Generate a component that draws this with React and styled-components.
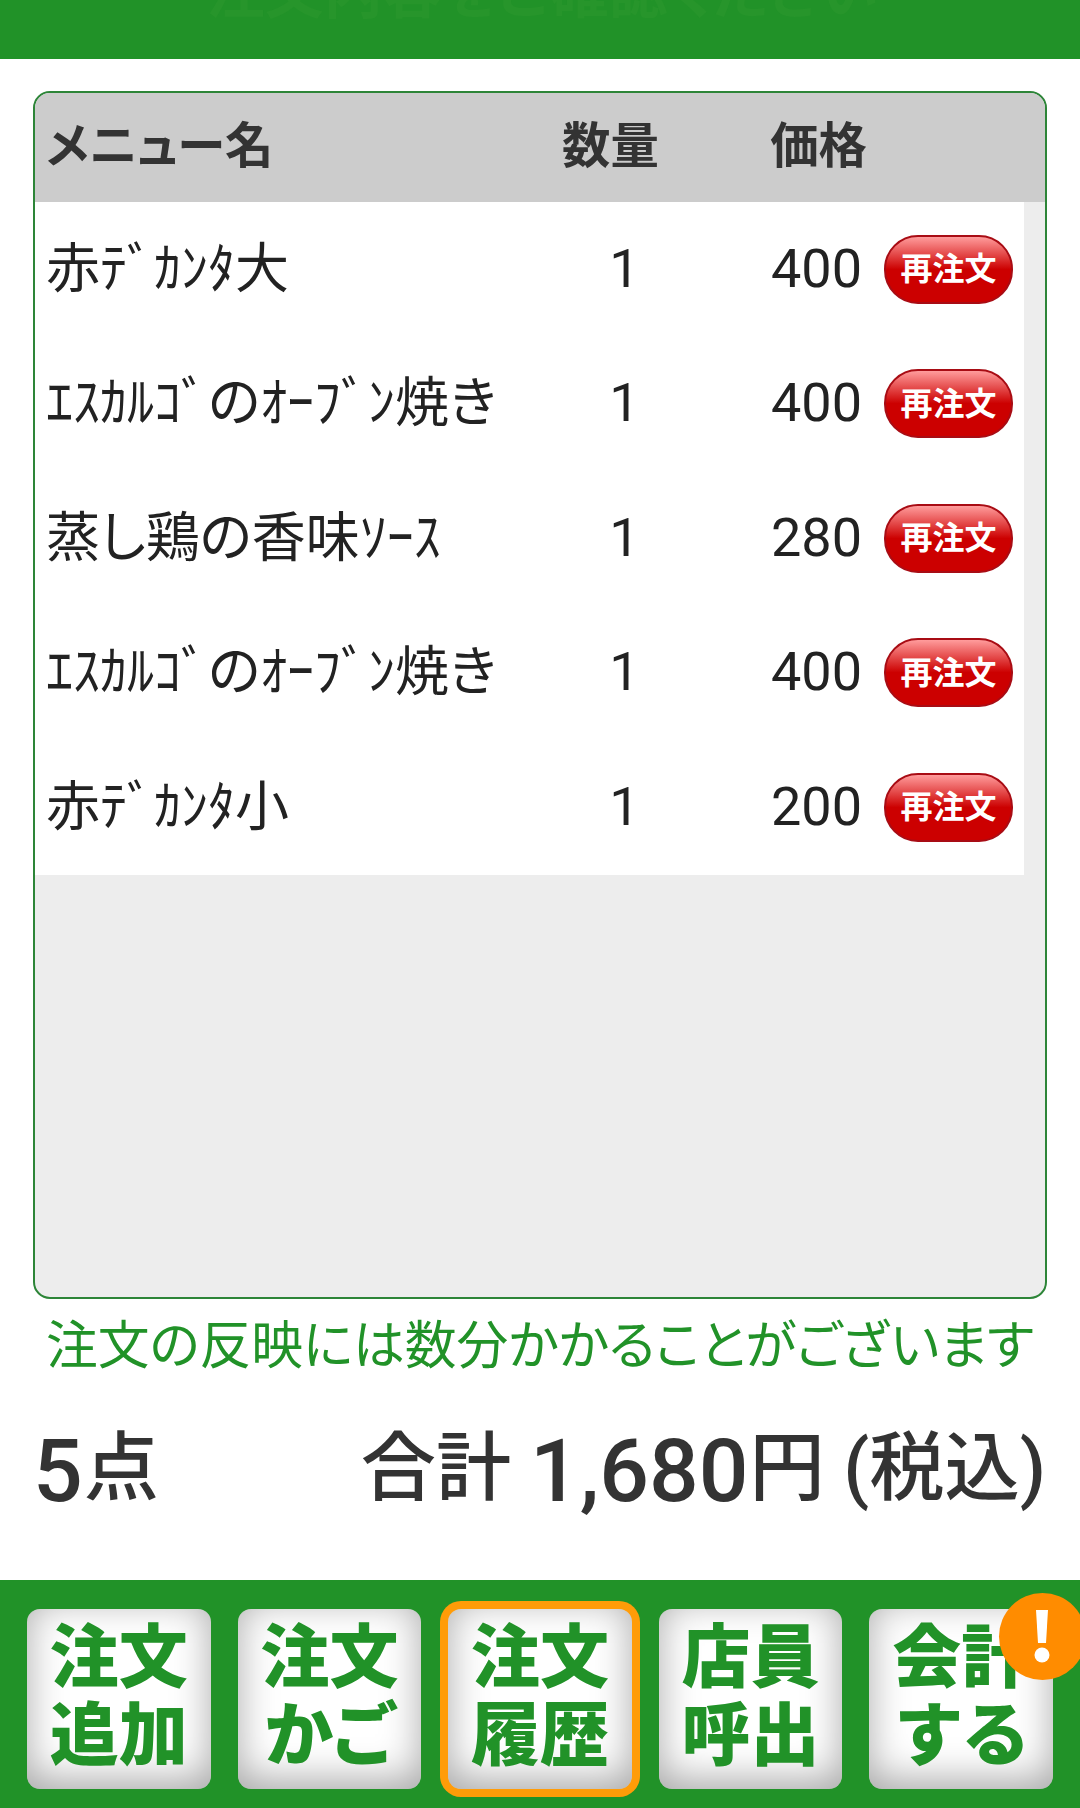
import React from "react";
import styled, { createGlobalStyle } from "styled-components";

const GlobalStyle = createGlobalStyle`
  * {
    box-sizing: border-box;
  }

  body {
    margin: 0;
    background: #fff;
    font-family: Roboto, "Noto Sans CJK JP", sans-serif;
    font-feature-settings: "palt";
    color: #222;
  }
`;

const Page = styled.div`
  display: flex;
  flex-direction: column;
  width: 1080px;
  height: 1808px;
  overflow: hidden;
`;

const Header = styled.header`
  display: flex;
  justify-content: center;
  align-items: flex-end;
  height: 59px;
  padding: 0 0 26px 4px;
  overflow: hidden;
  background: #219228;
`;

const HeaderTitle = styled.h1`
  margin: 0;
  font-size: 59px;
  line-height: 80px;
  font-weight: 700;
  color: #27952b;
`;

const Panel = styled.section`
  height: 1208px;
  margin: 32px 33px 0;
  border: 2px solid #2d8538;
  border-radius: 17px;
  overflow: hidden;
  background: #ededed;
`;

const Columns = styled.div`
  display: grid;
  grid-template-columns: 460px 209px 158px 1fr;
  align-items: center;
`;

const TableHead = styled(Columns)`
  height: 109px;
  padding: 0 0 11px 11px;
  background: #ccc;
  color: #333;
  font-size: 48.4px;
  font-weight: 700;
`;

const HeadCell = styled.div`
  padding-right: ${(props) => (props.$align === "right" ? "6px" : 0)};
  text-align: ${(props) => props.$align || "left"};
`;

const Row = styled(Columns)`
  width: 989px;
  height: 134.5px;
  padding-left: 11px;
  background: #fff;
  font-size: 54px;
`;

const Name = styled.div`
  padding-bottom: 10px;
  white-space: nowrap;
`;

const Count = styled.div`
  padding: 0 0 2px 28px;
  text-align: center;
`;

const Price = styled.div`
  padding: 0 11px 2px 0;
  text-align: right;
`;

const ReorderButton = styled.button`
  width: 129px;
  height: 69px;
  margin-left: 11px;
  padding: 0 0 6px;
  border: 2px solid #a80c14;
  border-radius: 34px;
  background: linear-gradient(#ff9c9c 0%, #c00 50%, #c00 100%);
  color: #fff;
  font-family: inherit;
  font-size: 32px;
  font-weight: 700;
  white-space: nowrap;
`;

const Notice = styled.p`
  margin: 0;
  padding-left: 46px;
  font-size: 51.8px;
  line-height: 96px;
  white-space: nowrap;
  color: #219228;
`;

const Summary = styled.div`
  display: flex;
  flex: 1;
  justify-content: space-between;
  align-items: flex-start;
  padding: 23px 34px 0 33px;
  font-size: 75.2px;
  line-height: 100px;
  font-weight: 500;
  white-space: nowrap;
  color: #333;
`;

const Figure = styled.span`
  margin-right: 1px;
  font-size: 87.5px;
  vertical-align: -7px;
`;

const Nav = styled.nav`
  display: flex;
  gap: 27px;
  height: 228px;
  padding: 29px 27px 0;
  background: #219228;
`;

const NavButton = styled.button`
  position: relative;
  flex: 1;
  height: 180px;
  padding: 0 0 2px;
  border: 0;
  border-radius: 13px;
  background: #fff;
  box-shadow: inset 0 -9px 38px rgba(0, 0, 0, 0.35)
    ${(props) => (props.$active ? ", 0 0 0 8px #ff9c08" : "")};
  color: #219228;
  font-family: inherit;
  font-size: 69px;
  line-height: 78.5px;
  font-weight: 900;
`;

const NavLine = styled.span`
  display: block;
  letter-spacing: ${(props) => props.$tracking || 0}px;
`;

const Badge = styled.span`
  position: absolute;
  top: -16px;
  right: -33px;
  display: flex;
  justify-content: center;
  align-items: center;
  width: 87px;
  height: 87px;
  border-radius: 50%;
  background: #ff8c00;
`;

const orders = [
  { name: "赤ﾃﾞｶﾝﾀ大", count: 1, price: 400 },
  { name: "ｴｽｶﾙｺﾞのｵｰﾌﾞﾝ焼き", count: 1, price: 400 },
  { name: "蒸し鶏の香味ｿｰｽ", count: 1, price: 280 },
  { name: "ｴｽｶﾙｺﾞのｵｰﾌﾞﾝ焼き", count: 1, price: 400 },
  { name: "赤ﾃﾞｶﾝﾀ小", count: 1, price: 200 },
];

const menus = [
  { top: "注文", bottom: "追加" },
  { top: "注文", bottom: "かご", tracking: -4 },
  { top: "注文", bottom: "履歴", active: true },
  { top: "店員", bottom: "呼出" },
  { top: "会計", bottom: "する", tracking: -2, alert: true },
];

export default function App() {
  const total = orders.reduce((sum, order) => sum + order.price * order.count, 0);

  return (
    <Page>
      <GlobalStyle />
      <Header>
        <HeaderTitle>注文内容をご確認ください</HeaderTitle>
      </Header>

      <Panel>
        <TableHead>
          <HeadCell>メニュー名</HeadCell>
          <HeadCell $align="center">数量</HeadCell>
          <HeadCell $align="right">価格</HeadCell>
        </TableHead>
        {orders.map((order, index) => (
          <Row key={index}>
            <Name>{order.name}</Name>
            <Count>{order.count}</Count>
            <Price>{order.price}</Price>
            <ReorderButton>再注文</ReorderButton>
          </Row>
        ))}
      </Panel>

      <Notice>注文の反映には数分かかることがございます</Notice>

      <Summary>
        <div>
          <Figure>{orders.length}</Figure>点
        </div>
        <div>
          合計 <Figure>{total.toLocaleString("en-US")}</Figure>円 (税込)
        </div>
      </Summary>

      <Nav>
        {menus.map((menu) => (
          <NavButton key={menu.bottom} $active={menu.active}>
            <NavLine>{menu.top}</NavLine>
            <NavLine $tracking={menu.tracking}>{menu.bottom}</NavLine>
            {menu.alert && (
              <Badge>
                <svg width="16" height="54" viewBox="0 0 16 54">
                  <path d="M2 0h12l-2 33H4z" fill="#fff" />
                  <circle cx="8" cy="45" r="7.5" fill="#fff" />
                </svg>
              </Badge>
            )}
          </NavButton>
        ))}
      </Nav>
    </Page>
  );
}
